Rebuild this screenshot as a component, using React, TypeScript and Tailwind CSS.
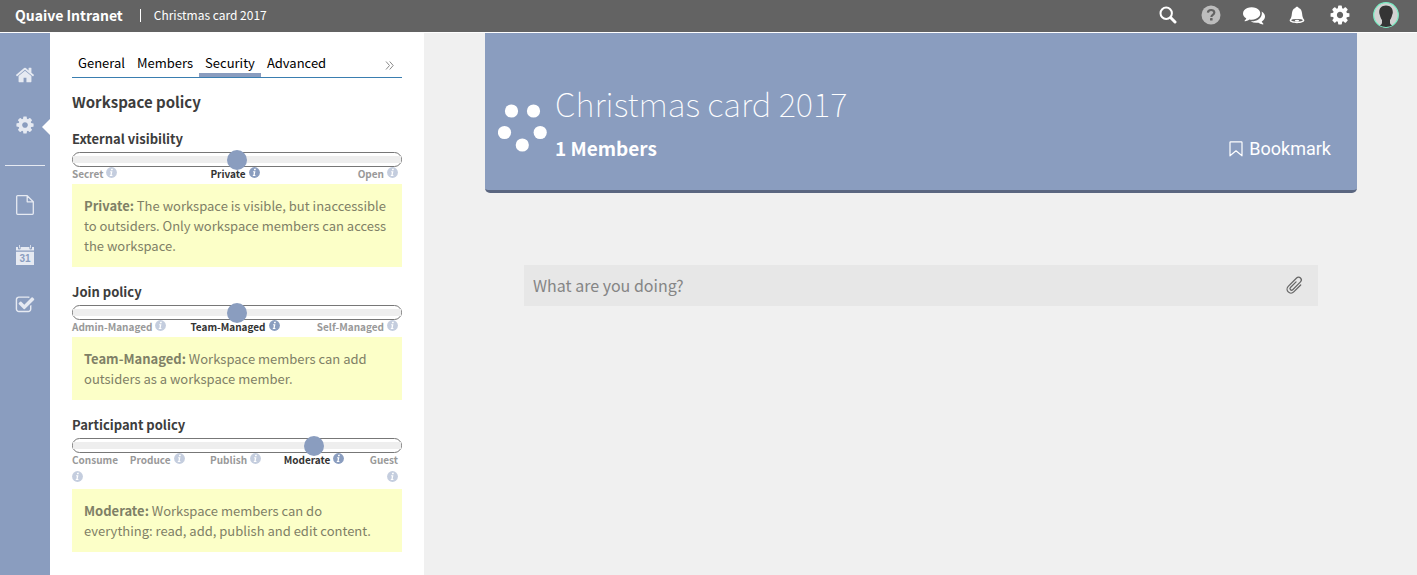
import { useId, useState } from "react";
import type { ReactNode } from "react";

const SANS = "font-['Noto_Sans_CJK_SC','Noto_Sans',sans-serif]";

type IconProps = { className?: string };

function Glyph({ d, className }: { d: string; className?: string }) {
  return (
    <svg viewBox="0 0 1792 1792" fill="currentColor" aria-hidden="true" className={className}>
      <path d={d} />
    </svg>
  );
}

const HOME =
  "M1472 992v480q0 26-19 45t-45 19h-384v-384h-256v384h-384q-26 0-45-19t-19-45v-480q0-1 .5-3t.5-3l575-474 575 474q1 2 1 6zm223-69l-62 74q-8 9-21 11h-3q-13 0-21-7l-692-577-692 577q-12 8-24 7-13-2-21-11l-62-74q-8-10-7-23.5t11-21.5l719-599q32-26 76-26t76 26l244 204v-195q0-14 9-23t23-9h192q14 0 23 9t9 23v408l219 182q10 8 11 21.5t-7 23.5z";
const COG =
  "M1152 896q0-106-75-181t-181-75-181 75-75 181 75 181 181 75 181-75 75-181zm512-109v222q0 12-8 23t-20 13l-185 28q-19 54-39 91 35 50 107 138 10 12 10 25t-9 23q-27 37-99 108t-94 71q-12 0-26-9l-138-108q-44 23-91 38-16 136-29 186-7 28-36 28h-222q-14 0-24.5-8.5t-11.5-21.5l-28-184q-49-16-90-37l-141 107q-10 9-25 9-14 0-25-11-126-114-165-168-7-10-7-23 0-12 8-23 15-21 51-66.5t54-70.5q-27-50-41-99l-183-27q-13-2-21-12.5t-8-23.5v-222q0-12 8-23t19-13l186-28q14-46 39-92-40-57-107-138-10-12-10-24 0-10 9-23 26-36 98.5-107.5t94.5-71.5q13 0 26 10l138 107q44-23 91-38 16-136 29-186 7-28 36-28h222q14 0 24.5 8.5t11.5 21.5l28 184q49 16 90 37l142-107q9-9 24-9 13 0 25 10 129 119 165 170 7 8 7 22 0 12-8 23-15 21-51 66.5t-54 70.5q26 50 41 98l183 28q13 2 21 12.5t8 23.5z";
const CHECK =
  "M1472 930v318q0 119-84.5 203.5t-203.5 84.5h-832q-119 0-203.5-84.5t-84.5-203.5v-832q0-119 84.5-203.5t203.5-84.5h832q63 0 117 25 15 7 18 23 3 17-9 29l-49 49q-10 10-23 10-3 0-9-2-23-6-45-6h-832q-66 0-113 47t-47 113v832q0 66 47 113t113 47h832q66 0 113-47t47-113v-254q0-13 9-22l64-64q10-10 23-10 6 0 12 3 20 8 20 29zm231-489l-814 814q-24 24-57 24t-57-24l-430-430q-24-24-24-57t24-57l110-110q24-24 57-24t57 24l263 263 647-647q24-24 57-24t57 24l110 110q24 24 24 57t-24 57z";
const COMMENTS =
  "M1408 768q0 139-94 257t-256.5 186.5-353.5 68.5q-86 0-176-16-124 88-278 128-36 9-86 16h-3q-11 0-20.5-8t-11.5-21q-1-3-1-6.5t.5-6.5 2-6l2.5-5 3.5-5.5 4-5 4.5-5 4-4.5q5-6 23-25t26-29.5 22.5-29 25-38.5 20.5-44q-124-72-195-177t-71-224q0-139 94-257t256.5-186.5 353.5-68.5 353.5 68.5 256.5 186.5 94 257zm384 256q0 120-71 224.5t-195 176.5q10 24 20.5 44t25 38.5 22.5 29 26 29.5 23 25q1 1 4 4.5t4.5 5 4 5 3.5 5.5l2.5 5 2 6 .5 6.5-1 6.5q-3 14-13 22t-22 7q-50-7-86-16-154-40-278-128-90 16-176 16-271 0-472-132 58 4 88 4 161 0 309-45t264-129q125-92 192-212t67-254q0-77-23-152 129 71 204 178t75 230z";

function SearchIcon({ className }: IconProps) {
  return (
    <svg viewBox="0 0 18 18" fill="none" stroke="currentColor" aria-hidden="true" className={className}>
      <circle cx="7.2" cy="7.2" r="5.7" strokeWidth="2" />
      <path d="M11.8 11.8l4.2 4.2" strokeWidth="3" strokeLinecap="round" />
    </svg>
  );
}

function HelpIcon({ className }: IconProps) {
  return (
    <svg viewBox="0 0 20 20" aria-hidden="true" className={className}>
      <circle cx="10" cy="10" r="9.5" fill="#bdbdbd" />
      <path
        d="M6.9 7.6C7 5.9 8.3 5 10.1 5c1.9 0 3.2 1 3.2 2.6 0 2.3-2.9 2.3-2.9 4.3"
        fill="none"
        stroke="#636363"
        strokeWidth="2.2"
      />
      <rect x="9" y="13" width="2.6" height="2.5" rx="0.6" fill="#636363" />
    </svg>
  );
}

function BellIcon({ className }: IconProps) {
  return (
    <svg viewBox="0 0 16 18" fill="currentColor" aria-hidden="true" className={className}>
      <path d="M8 .8c1 0 1.5.6 1.7 1.3 2.3.7 3.1 3 3.4 5.4.3 2.800.6 4.800 2.100 6.200C16.100 16 12.400 17.200 8 17.200S-.1 16 .8 13.700c1.500-1.400 1.800-3.400 2.100-6.200.3-2.400 1.100-4.700 3.400-5.400C6.500 1.400 7 .8 8 .8z" />
      <ellipse cx="8" cy="14.3" rx="5.8" ry="1.4" fill="#636363" />
      <ellipse cx="8" cy="14.7" rx="2.2" ry="1" />
    </svg>
  );
}

function Avatar() {
  return (
    <svg viewBox="0 0 26 26" aria-hidden="true" className="size-[26px]">
      <circle cx="13" cy="13" r="12.3" fill="#d2d2d2" stroke="#79efc5" strokeWidth="1.2" />
      <path
        d="M13 3.6c4.4 0 6.900 2.800 6.800 6.700 0 1.300-.5 2.200-.8 3.200-.4 1.500-.9 3.200-2 4.600v2.600c.1 1.700 1.200 2.100 2.300 2.600-3.700 2.300-8.900 2.300-12.600 0 1.100-.5 2.200-.9 2.300-2.600v-2.600c-1.100-1.400-1.600-3.100-2-4.600-.3-1-.8-1.900-.8-3.200C6.100 6.400 8.600 3.600 13 3.600z"
        fill="#353535"
      />
    </svg>
  );
}

function PageIcon({ className }: IconProps) {
  return (
    <svg viewBox="0 0 18 20" fill="none" stroke="currentColor" strokeWidth="1.3" strokeLinejoin="round" aria-hidden="true" className={className}>
      <path d="M1.6.7h9.600l6.100 6.100v11.500q0 1-1 1H1.600q-.9 0-.9-1V1.600Q.7.7 1.600.7zM11.200.7v6.100h6.100" />
    </svg>
  );
}

function CalendarIcon({ className }: IconProps) {
  return (
    <svg viewBox="0 0 18 20" fill="currentColor" aria-hidden="true" className={className}>
      <path d="M0 2h2v1.400q0 1 1.300 1t1.300-1V2h8.800v1.400q0 1 1.300 1t1.300-1V2h2v3.600H0z" />
      <path d="M3 0h.8v3.200H3zM14.200 0h.8v3.200h-.8zM0 6.800h18V20H0z" />
      <text x="9" y="16.8" textAnchor="middle" fontSize="10" fontWeight="700" fill="#8a9dbf" className="font-['Liberation_Sans',sans-serif]">
        31
      </text>
    </svg>
  );
}

function BookmarkIcon({ className }: IconProps) {
  return (
    <svg viewBox="0 0 14 16" fill="none" stroke="currentColor" strokeWidth="1.2" strokeLinejoin="round" aria-hidden="true" className={className}>
      <path d="M1.600.8h10.800q.6 0 .6.600v13.400L7 9.800l-6 5V1.400Q1 .8 1.600.8z" />
    </svg>
  );
}

function ClipIcon({ className }: IconProps) {
  return (
    <svg viewBox="0 0 18 18" fill="none" stroke="currentColor" strokeWidth="1.2" strokeLinecap="round" aria-hidden="true" className={className}>
      <path
        d="M12.800 4.500V13.800a3.700 3.700 0 0 1-7.400 0V2.600a2.600 2.600 0 0 1 5.200 0V13a1.500 1.500 0 0 1-3 0V5.500"
        transform="rotate(45 9 9)"
      />
    </svg>
  );
}

function InfoIcon({ active }: { active: boolean }) {
  return (
    <svg viewBox="0 0 11 11" aria-hidden="true" className={active ? "size-[11px]" : "size-[11px] opacity-50"}>
      <circle cx="5.5" cy="5.5" r="5.4" fill="#8a9dbf" />
      <path d="M5.200 1.700h1.700l-.3 1.500H4.900zM4.200 4.200h2.200l-.7 3.700h.8l-.2 1H3.700l.2-1h.5l.5-2.700h-.9z" fill="#fff" />
    </svg>
  );
}

type PolicyProps = {
  title: string;
  options: string[];
  initial: number;
  wrapEnds?: boolean;
  children: ReactNode;
};

function Policy({ title, options, initial, wrapEnds = false, children }: PolicyProps) {
  const id = useId();
  const [value, setValue] = useState(initial);
  const last = options.length - 1;
  return (
    <section className="flex flex-col">
      <label htmlFor={id} className="mb-[3px] text-[13px] leading-5 font-bold text-[#3d3d3d]">
        {title}
      </label>
      <input
        id={id}
        type="range"
        min={0}
        max={last}
        value={value}
        onChange={(e) => setValue(Number(e.target.value))}
        className="m-0 h-[15px] w-full appearance-none rounded-full border border-[#777] bg-white [&::-webkit-slider-runnable-track]:h-[7px] [&::-webkit-slider-runnable-track]:bg-[#eee] [&::-webkit-slider-thumb]:mt-[-6px] [&::-webkit-slider-thumb]:size-5 [&::-webkit-slider-thumb]:appearance-none [&::-webkit-slider-thumb]:rounded-full [&::-webkit-slider-thumb]:bg-[#8a9dbf]"
      />
      <ul
        className={
          wrapEnds
            ? "grid grid-cols-[4fr_7fr_7fr_7fr_4fr] pr-1 pb-[3px]"
            : "grid grid-cols-[1fr_auto_1fr] pr-1 pb-[3px]"
        }
      >
        {options.map((name, i) => {
          const wrapped = wrapEnds && (i === 0 || i === last);
          const side = i === 0 ? "justify-start" : i === last ? "justify-end" : "justify-center";
          const layout = wrapped ? (i === 0 ? "flex-col items-start" : "flex-col items-end") : `gap-[3px] ${side}`;
          return (
            <li
              key={name}
              className={`flex whitespace-nowrap ${layout} ${i === value ? "text-[#333]" : "text-[#999]"}`}
            >
              <span className="text-[10px] leading-[14px] font-bold">{name}</span>
              <span className={wrapped ? "flex h-[19px] items-center" : "flex h-[11px] items-center"}>
                <InfoIcon active={i === value} />
              </span>
            </li>
          );
        })}
      </ul>
      <p className="bg-[#fcffc8] px-3 pt-3 pb-[11px] text-[13px] leading-5 text-[#7f8066]">{children}</p>
    </section>
  );
}

const TABS = ["General", "Members", "Security", "Advanced"];

const TOOL = "flex w-[43px] items-center justify-center";

export default function App() {
  return (
    <div className={`flex min-h-screen flex-col bg-[#f0f0f0] ${SANS}`}>
      <header className="flex h-[33px] items-center border-b border-white bg-[#636363] pr-[18px] pb-[2px] pl-[15px] text-white">
        <a href="#" className="text-sm leading-5 font-bold">
          Quaive Intranet
        </a>
        <span className="mr-[13px] ml-[17px] h-[13px] w-px bg-white" />
        <span className="text-xs leading-5">Christmas card 2017</span>
        <nav className="ml-auto flex items-center">
          <button aria-label="Search" className={TOOL}><SearchIcon className="size-[18px]" /></button>
          <button aria-label="Help" className={TOOL}><HelpIcon className="size-5" /></button>
          <button aria-label="Messages" className={TOOL}><Glyph d={COMMENTS} className="size-[22px]" /></button>
          <button aria-label="Notifications" className={TOOL}><BellIcon className="h-[18px] w-4" /></button>
          <button aria-label="Settings" className={TOOL}><Glyph d={COG} className="size-[22px]" /></button>
          <button aria-label="Profile" className="ml-3"><Avatar /></button>
        </nav>
      </header>

      <div className="flex flex-1">
        <nav className="flex w-[50px] shrink-0 flex-col items-center bg-[#8a9dbf] pt-[17px] text-[#e6eaf2]">
          <a href="#home" aria-label="Home" className="flex h-[50px] items-center">
            <Glyph d={HOME} className="size-5" />
          </a>
          <a href="#settings" aria-label="Settings" className="relative flex h-[50px] w-full items-center justify-center">
            <Glyph d={COG} className="size-5" />
            <svg viewBox="0 0 8 16" aria-hidden="true" className="absolute top-[19px] right-0 h-4 w-2 text-white">
              <path d="M8 0v16L0 8z" fill="currentColor" />
            </svg>
          </a>
          <hr className="mt-[15px] mb-[14px] w-10 border-[#e6eaf2]" />
          <a href="#documents" aria-label="Documents" className="flex h-[50px] items-center">
            <PageIcon className="h-5 w-[18px]" />
          </a>
          <a href="#calendar" aria-label="Calendar" className="flex h-[50px] items-center">
            <CalendarIcon className="h-5 w-[18px]" />
          </a>
          <a href="#tasks" aria-label="Tasks" className="flex h-[50px] items-center">
            <Glyph d={CHECK} className="size-5" />
          </a>
        </nav>

        <aside className="w-[374px] shrink-0 bg-white px-[22px] pt-5 pb-5">
          <nav className="flex items-center border-b border-[#3a7eb0] text-[13px] leading-5 text-black">
            {TABS.map((tab) => (
              <a
                key={tab}
                href="#"
                className={
                  tab === "Security"
                    ? "border-b-4 border-[#8a9dbf] px-[6px]"
                    : "border-b-4 border-transparent px-[6px]"
                }
              >
                {tab}
              </a>
            ))}
            <button aria-label="More tabs" className="mr-2 ml-auto text-[#888]">
              <svg viewBox="0 0 9 9" fill="none" stroke="currentColor" aria-hidden="true" className="size-[9px]">
                <path d="M1 .5l3.500 4L1 8.500M4.700.5l3.500 4-3.500 4" />
              </svg>
            </button>
          </nav>
          <h1 className="mt-[14px] mb-[17px] text-[15px] leading-5 font-bold text-[#3d3d3d]">Workspace policy</h1>
          <div className="flex flex-col gap-[15px]">
            <Policy title="External visibility" options={["Secret", "Private", "Open"]} initial={1}>
              <b>Private:</b> The workspace is visible, but inaccessible to outsiders. Only workspace members can access the
              workspace.
            </Policy>
            <Policy title="Join policy" options={["Admin-Managed", "Team-Managed", "Self-Managed"]} initial={1}>
              <b>Team-Managed:</b> Workspace members can add outsiders as a workspace member.
            </Policy>
            <Policy
              title="Participant policy"
              options={["Consume", "Produce", "Publish", "Moderate", "Guest"]}
              initial={3}
              wrapEnds
            >
              <b>Moderate:</b> Workspace members can do everything: read, add, publish and edit content.
            </Policy>
          </div>
        </aside>

        <main className="min-w-0 flex-1 pr-[60px] pl-[61px]">
          <header className="flex h-40 items-end gap-2 rounded-b-[5px] border-b-[3px] border-[#5a6680] bg-[#8a9dbf] pr-[26px] pb-[27px] pl-[13px] text-white">
            <svg viewBox="0 0 49 48" fill="currentColor" aria-hidden="true" className="mb-[11px] h-12 w-[49px]">
              <circle cx="13.5" cy="7" r="6.6" />
              <circle cx="35.5" cy="7" r="6.6" />
              <circle cx="6.5" cy="28.5" r="6.6" />
              <circle cx="42.2" cy="28.5" r="6.6" />
              <circle cx="24.3" cy="41" r="6.6" />
            </svg>
            <div>
              <h2 className="mb-[6px] text-[33px] leading-[48px] font-thin">Christmas card 2017</h2>
              <p className="text-[19px] leading-[30px] font-bold">1 Members</p>
            </div>
            <button className="ml-auto flex items-center gap-[6px] font-['Roboto',sans-serif] text-lg leading-7">
              <BookmarkIcon className="h-4 w-[14px]" />
              Bookmark
            </button>
          </header>
          <form className="mx-[39px] mt-[72px] flex h-[41px] items-center bg-[#e7e7e7] pr-[14px] pl-[9px]">
            <input
              type="text"
              aria-label="What are you doing?"
              placeholder="What are you doing?"
              className="min-w-0 flex-1 bg-transparent pb-[2px] text-base leading-6 text-[#555] outline-none placeholder:text-[#858585]"
            />
            <button type="button" aria-label="Attach file" className="text-[#666]">
              <ClipIcon className="size-[19px]" />
            </button>
          </form>
        </main>
      </div>
    </div>
  );
}
